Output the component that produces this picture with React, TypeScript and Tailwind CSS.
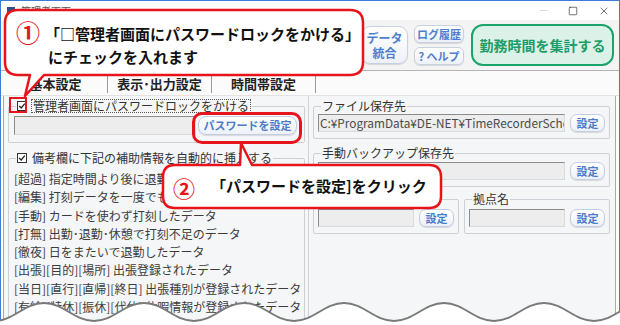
import React from 'react';
import { Minus, Square, X } from 'lucide-react';

const remarkLines = [
  '[超過] 指定時間より後に退勤したデータ',
  '[編集] 打刻データを一度でも修正したデータ',
  '[手動] カードを使わず打刻したデータ',
  '[打無] 出勤･退勤･休憩で打刻不足のデータ',
  '[徹夜] 日をまたいで退勤したデータ',
  '[出張][目的][場所] 出張登録されたデータ',
  '[当日][直行][直帰][終日] 出張種別が登録されたデータ',
  '[有給][特休][振休][代休] 休暇情報が登録されたデータ',
];

function CheckBox() {
  return (
    <span className="inline-flex items-center justify-center w-[10px] h-[10px] border border-[#333] bg-white shrink-0">
      <svg viewBox="0 0 10 10" className="w-[8px] h-[8px]">
        <path d="M1.5 5 L4 7.5 L8.5 2" stroke="#222" strokeWidth="1.6" fill="none" />
      </svg>
    </span>
  );
}

function Field({ text, className = '' }: { text?: string; className?: string }) {
  return (
    <div
      className={`min-w-0 h-[18px] bg-[#ededed] border border-t-[#8c8c8c] border-l-[#8c8c8c] border-r-[#dadada] border-b-[#dadada] overflow-hidden whitespace-nowrap text-[11.8px] leading-[16px] text-[#4a4a4a] pl-[1px] ${className}`}
    >
      {text}
    </div>
  );
}

function SetButton() {
  return (
    <button className="w-[35px] h-[18px] shrink-0 rounded-[7px] border border-[#c3cce0] bg-linear-to-b from-white to-[#edf1f8] shadow-[0_1px_1px_rgba(0,0,0,0.12)] text-[11px] font-bold text-[#4b7bc8] leading-none">
      設定
    </button>
  );
}

function Box({ legend, children, className = '' }: { legend: React.ReactNode; children: React.ReactNode; className?: string }) {
  return (
    <fieldset className={`min-w-0 border border-[#cdd1d7] rounded-[2px] px-[4px] pb-[6px] ${className}`}>
      <legend className="ml-[3px] px-[1px] text-[12px] leading-[14px] text-[#333]">{legend}</legend>
      {children}
    </fieldset>
  );
}

function wavePath() {
  let d = 'M -6 26';
  for (let x = -6; x < 640; x += 100) {
    d += ` C ${x + 20} 26 ${x + 30} 8 ${x + 50} 8 C ${x + 70} 8 ${x + 80} 26 ${x + 100} 26`;
  }
  return d;
}

export default function App() {
  const wave = wavePath();
  return (
    <div className="relative w-[620px] h-[325px] overflow-hidden bg-white font-['Noto_Sans_CJK_JP','Noto_Sans',sans-serif]">
      <div className="h-full flex flex-col border-l border-t border-r border-[#3b7dd6]">
        {/* title bar */}
        <div className="h-[19px] shrink-0 flex items-center bg-white">
          <div className="ml-[6px] w-[8px] h-[8px] bg-[#2a4f8a]" />
          <span className="ml-[6px] text-[10px] text-[#555]">管理者画面</span>
          <div className="ml-auto flex items-center">
            <Minus className="w-[11px] h-[11px] text-[#c8c8c8] mr-[19px]" strokeWidth={1.5} />
            <Square className="w-[10px] h-[10px] text-[#222] mr-[20px]" strokeWidth={1.5} />
            <X className="w-[12px] h-[12px] text-[#222] mr-[9px]" strokeWidth={1.3} />
          </div>
        </div>

        {/* toolbar */}
        <div className="h-[51px] shrink-0 flex items-center justify-end pr-[5px] bg-[#f4f4f4] border-b border-[#b4b4b4]">
          <button className="w-[47px] h-[38px] rounded-[9px] border border-[#c7d0df] bg-linear-to-b from-white to-[#edf1f8] shadow-[0_1px_1px_rgba(0,0,0,0.12)] text-[12px] font-bold leading-[15px] text-[#4f7fcc]">
            データ
            <br />
            統合
          </button>
          <div className="ml-[6px] flex flex-col gap-[4px]">
            <button className="w-[50px] h-[18px] rounded-[6px] border border-[#c7d0df] bg-linear-to-b from-white to-[#edf1f8] shadow-[0_1px_1px_rgba(0,0,0,0.12)] text-[11px] font-bold leading-none text-[#4f7fcc]">
              ログ履歴
            </button>
            <button className="w-[50px] h-[18px] rounded-[6px] border border-[#c7d0df] bg-linear-to-b from-white to-[#edf1f8] shadow-[0_1px_1px_rgba(0,0,0,0.12)] text-[11px] font-bold leading-none text-[#4f7fcc]">
              ? ヘルプ
            </button>
          </div>
          <button className="ml-[7px] w-[143px] h-[42px] rounded-[12px] border-2 border-[#1ba36c] bg-[#dcf2e8] text-[14px] font-bold text-[#1c9c69]">
            勤務時間を集計する
          </button>
        </div>

        {/* tabs */}
        <div className="h-[25px] shrink-0 flex items-center pl-[3px] bg-[#fbfbfb] border-b border-[#e2e2e2]">
          {['基本設定', '表示･出力設定', '時間帯設定'].map((t) => (
            <div key={t} className="w-[104px] h-[17px] flex items-center justify-center border-r border-[#9a9a9a] text-[13px] font-semibold text-[#222] mt-[2px]">
              {t}
            </div>
          ))}
        </div>

        {/* panel */}
        <div className="flex-1 min-h-0 overflow-hidden flex ml-[2px] mr-[3px] border-l border-r border-[#a9a9a9] bg-[#f5f6f8]">
          <div className="w-[305px] shrink-0 pl-[4px] pr-[3px] pt-[3px] border-r border-[#d2d2d2]">
            <Box
              legend={
                <span className="flex items-center gap-[4px]">
                  <CheckBox />
                  <span className="border border-dotted border-[#555] px-[1px] leading-[12px]">管理者画面にパスワードロックをかける</span>
                </span>
              }
              className="pb-[7px]"
            >
              <div className="flex items-center gap-[2px] pt-[3px] pl-[1px] pr-[3px]">
                <Field className="flex-1 h-[19px]" />
                <button className="w-[99px] h-[19px] shrink-0 rounded-[8px] border border-[#c3cce0] bg-linear-to-b from-white to-[#edf1f8] shadow-[0_1px_1px_rgba(0,0,0,0.12)] text-[11px] font-bold text-[#4b7bc8] leading-none">
                  パスワードを設定
                </button>
              </div>
            </Box>

            <Box
              legend={
                <span className="flex items-center gap-[5px]">
                  <CheckBox />
                  <span>備考欄に下記の補助情報を自動的に挿入する</span>
                </span>
              }
              className="mt-[8px] h-[200px]"
            >
              <div className="pt-[5px] pl-[1px] text-[12px] leading-[18.3px] text-[#3c3c3c] whitespace-nowrap">
                {remarkLines.map((l) => (
                  <div key={l}>{l}</div>
                ))}
              </div>
            </Box>
          </div>

          <div className="flex-1 min-w-0 pl-[4px] pr-[5px] pt-[3px]">
            <Box legend="ファイル保存先">
              <div className="flex items-center gap-[5px] pt-[1px]">
                <Field className="flex-1" text="C:¥ProgramData¥DE-NET¥TimeRecorderSchool" />
                <SetButton />
              </div>
            </Box>
            <Box legend="手動バックアップ保存先" className="mt-[7px]">
              <div className="flex items-center gap-[5px] pt-[2px]">
                <Field className="flex-1" />
                <SetButton />
              </div>
            </Box>
            <div className="mt-[5px] flex gap-[5px]">
              <Box legend="端末名" className="flex-1">
                <div className="flex items-center gap-[5px] pt-[3px]">
                  <Field className="flex-1" />
                  <SetButton />
                </div>
              </Box>
              <Box legend="拠点名" className="flex-1">
                <div className="flex items-center gap-[5px] pt-[3px]">
                  <Field className="flex-1" />
                  <SetButton />
                </div>
              </Box>
            </div>
          </div>
        </div>
      </div>

      {/* highlights */}
      <div className="absolute left-[9px] top-[97px] w-[18px] h-[16px] border-2 border-[#e8141c]" />
      <div className="absolute left-[192px] top-[112px] w-[110px] h-[32px] rounded-[10px] border-[3px] border-[#e8141c]" />

      {/* callouts */}
      <svg className="absolute left-0 top-0 w-[620px] h-[325px] pointer-events-none" viewBox="0 0 620 325">
        <path
          d="M 18 10 H 350 Q 363 10 363 23 V 62 Q 363 75 350 75 H 44 L 25 96 L 30 75 H 18 Q 5 75 5 62 V 23 Q 5 10 18 10 Z"
          fill="white"
          stroke="#e8141c"
          strokeWidth="2.5"
          strokeLinejoin="round"
        />
        <path
          d="M 175 165 H 240 L 241 143 L 252 165 H 429 Q 441 165 441 177 V 196 Q 441 208 429 208 H 175 Q 163 208 163 196 V 177 Q 163 165 175 165 Z"
          fill="white"
          stroke="#e8141c"
          strokeWidth="2.5"
          strokeLinejoin="round"
        />
      </svg>
      <span className="absolute left-[16px] top-[18px] text-[24px] leading-[28px] font-bold text-[#e8141c]">①</span>
      <div className="absolute left-[45px] top-[22px] text-[15px] leading-[23px] font-bold text-[#111] whitespace-nowrap">
        「□管理者画面にパスワードロックをかける」
        <div className="pl-[3px]">にチェックを入れます</div>
      </div>
      <span className="absolute left-[173px] top-[174px] text-[22px] leading-[26px] font-bold text-[#e8141c]">②</span>
      <div className="absolute left-[211px] top-[175px] text-[15px] leading-[22px] font-bold text-[#111] whitespace-nowrap">
        「パスワードを設定]をクリック
      </div>

      {/* torn edge */}
      <svg className="absolute left-0 top-[295px] w-[620px] h-[30px]" viewBox="0 0 620 30">
        <path d={`${wave} L 700 40 L -10 40 Z`} fill="white" />
        <path d={wave} fill="none" stroke="#7a7a7a" strokeWidth="2" />
      </svg>
    </div>
  );
}
